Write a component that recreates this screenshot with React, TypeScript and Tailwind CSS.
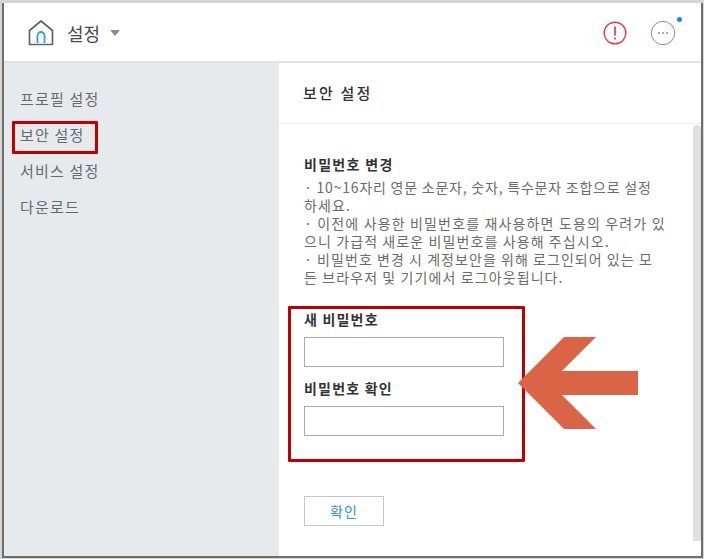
import React from 'react';

const font = { fontFamily: '"Noto Sans CJK KR", "Liberation Sans", sans-serif' };

const HomeLogo = () => (
    <svg width="26" height="26" viewBox="0 0 26 26" fill="none">
        <path d="M1.5 10.5 L13 1 L24.5 10.5 V24.5 H1.5 Z" stroke="#5f6468" strokeWidth="1.7" strokeLinejoin="round" />
        <path d="M9.5 23 V15.5 a3.5 3.5 0 0 1 7 0 V23" stroke="#2a9fe0" strokeWidth="1.8" />
    </svg>
);

const AlertIcon = () => (
    <svg width="24" height="24" viewBox="0 0 24 24" fill="none">
        <circle cx="12" cy="12" r="10.8" stroke="#d9434b" strokeWidth="1.4" />
        <path d="M12 5.5 V14.5" stroke="#d9434b" strokeWidth="1.7" />
        <circle cx="12" cy="17.5" r="1.1" fill="#d9434b" />
    </svg>
);

const MoreIcon = () => (
    <div className="relative">
        <svg width="26" height="26" viewBox="0 0 26 26" fill="none" className="block">
            <circle cx="13" cy="13" r="11.7" stroke="#8c8c8c" strokeWidth="1" />
            <circle cx="9" cy="13" r="1" fill="#8c8c8c" />
            <circle cx="13" cy="13" r="1" fill="#8c8c8c" />
            <circle cx="17" cy="13" r="1" fill="#8c8c8c" />
        </svg>
        <span className="absolute -top-[3px] -right-[6px] w-[5px] h-[5px] rounded-full bg-[#1e88e5]" />
    </div>
);

const menuItems = ['프로필 설정', '보안 설정', '서비스 설정', '다운로드'];

// the reference wraps mid-word, so the lines are kept as they break there
const noteLines = [
    { text: '· 10~16자리 영문 소문자, 숫자, 특수문자 조합으로 설정', spacing: 'tracking-[0.78px]' },
    { text: '하세요.', spacing: 'tracking-[1.1px]' },
    { text: '· 이전에 사용한 비밀번호를 재사용하면 도용의 우려가 있', spacing: 'tracking-[1.15px]' },
    { text: '으니 가급적 새로운 비밀번호를 사용해 주십시오.', spacing: 'tracking-[1.1px]' },
    { text: '· 비밀번호 변경 시 계정보안을 위해 로그인되어 있는 모', spacing: 'tracking-[1.05px]' },
    { text: '든 브라우저 및 기기에서 로그아웃됩니다.', spacing: 'tracking-[1.1px]' },
];

const App: React.FC = () => {
    return (
        <div style={font} className="relative w-[704px] h-[559px] bg-[#d6d6d6] overflow-hidden">
            <div className="absolute left-[2px] top-[3px] w-[701px] h-[555px] border-l-2 border-r-2 border-b-2 border-[#6e6e6e] bg-white flex flex-col">
                <header className="h-[60px] shrink-0 border-b-2 border-[#e2e2e2] flex items-center pt-[1px] pl-[24px] pr-[25px]">
                    <HomeLogo />
                    <span className="ml-[13px] text-[18px] leading-none text-[#4a4a4a]">설정</span>
                    <span className="ml-[10px] mt-[1px] w-0 h-0 border-l-[5px] border-r-[5px] border-t-[6px] border-l-transparent border-r-transparent border-t-[#8c8c8c]" />
                    <div className="ml-auto flex items-center gap-[23px]">
                        <AlertIcon />
                        <MoreIcon />
                    </div>
                </header>
                <div className="flex flex-1 min-h-0">
                    <aside className="w-[275px] shrink-0 bg-[#e7eaed] pt-[18px] pl-[16px]">
                        {menuItems.map((item) => (
                            <div key={item} className="h-[36px] flex items-center text-[15px] tracking-[1.2px] text-[#666a6e]">
                                {item}
                            </div>
                        ))}
                    </aside>
                    <main className="flex-1 min-w-0 flex flex-col">
                        <div className="h-[61px] shrink-0 border-b border-[#f0f0f0] flex items-center pt-[1px] pl-[24px] text-[15px] font-medium tracking-[2.2px] text-[#333333]">
                            보안 설정
                        </div>
                        <div className="flex-1 min-h-0 flex">
                            <div className="flex-1 min-w-0 pl-[25px] pt-[30px]">
                                <h3 className="text-[14px] leading-[20px] font-bold tracking-[1.3px] text-[#333333]">비밀번호 변경</h3>
                                <div className="mt-[4px] text-[14px] leading-[18px] text-[#6b6b6b]">
                                    {noteLines.map((line) => (
                                        <p key={line.text} className={`whitespace-nowrap ${line.spacing}`}>{line.text}</p>
                                    ))}
                                </div>
                                <label className="block mt-[23px] text-[14px] leading-[20px] font-bold tracking-[1.2px] text-[#333333]">새 비밀번호</label>
                                <input className="block mt-[8px] w-[200px] h-[30px] border border-[#a9adb2] bg-white" />
                                <label className="block mt-[11px] text-[14px] leading-[20px] font-bold tracking-[1.2px] text-[#333333]">비밀번호 확인</label>
                                <input className="block mt-[8px] w-[200px] h-[30px] border border-[#a9adb2] bg-white" />
                                <button className="block mt-[60px] w-[80px] h-[30px] border border-[#c8c8c8] bg-white text-[14px] tracking-[1px] text-[#2f8fe6]">확인</button>
                            </div>
                            <div className="w-[8px] mt-[1px] mb-[15px] shrink-0 rounded-t-[4px] bg-[#e0e0e0]" />
                        </div>
                    </main>
                </div>
            </div>

            {/* annotations drawn over the screenshot */}
            <div className="absolute left-[12px] top-[121px] w-[86px] h-[33px] border-[3px] border-[#c00000] rounded-[1px]" />
            <div className="absolute left-[288px] top-[306px] w-[237px] h-[156px] border-[3px] border-[#c00000] rounded-[1px]" />
            <svg className="absolute left-[518px] top-[337px]" width="120" height="92" viewBox="0 0 120 92">
                <path d="M0 46 L46 0 L78 0 L44 34 L120 34 L120 58 L44 58 L78 92 L46 92 Z" fill="#da6446" />
            </svg>
        </div>
    );
};

export default App;
